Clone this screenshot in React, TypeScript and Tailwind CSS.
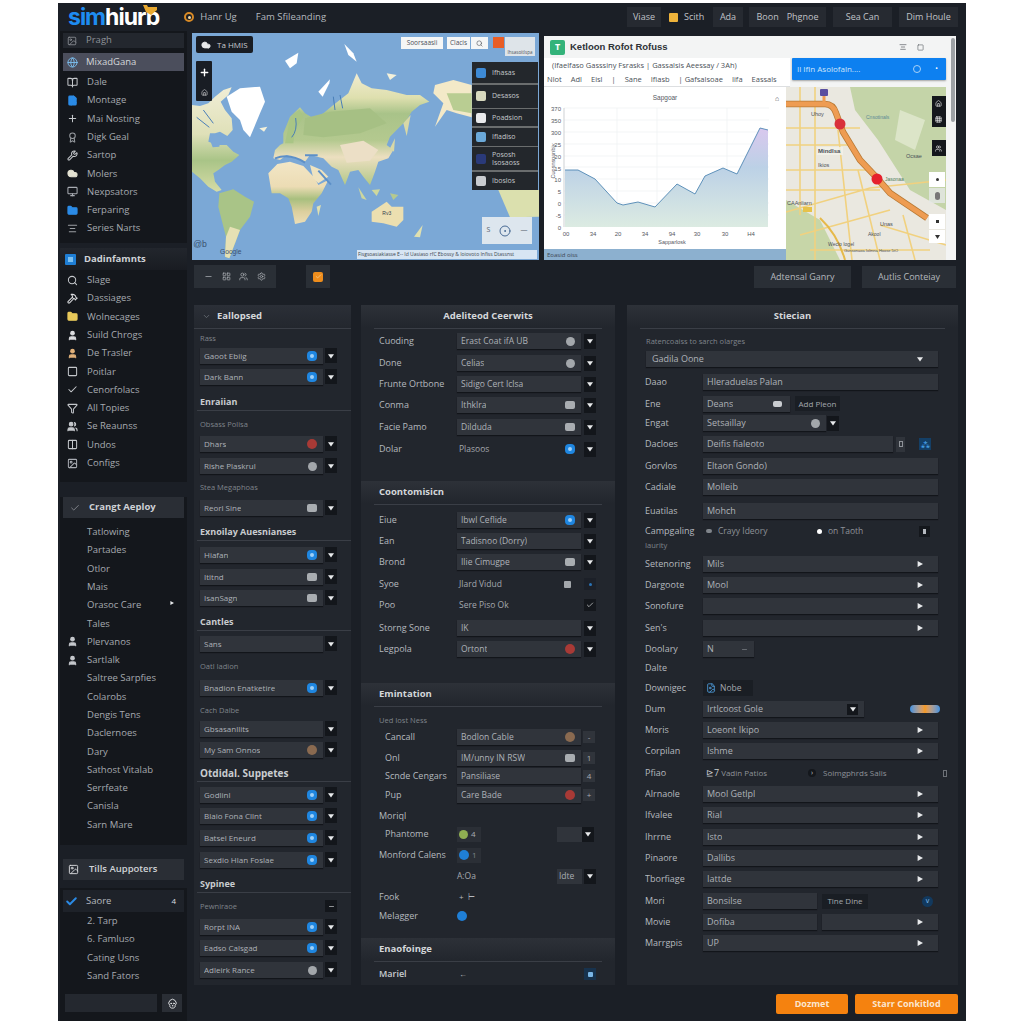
import {
  Image, Globe, BookOpen, FileImage, Plus, Award, Wrench, Cloud, Monitor, Folder, AlignCenter, Search, Hammer,
  User, Square, Check, Filter, Users, Columns2, ChevronDown, Grid3x3, LayoutGrid, Settings, CircleDot, Skull, Home, Minus,
} from 'lucide-react';
import type { ReactNode } from 'react';

function Caret({ dir = 'down', size = 6 }: { dir?: 'down' | 'right'; size?: number }) {
  return (
    <svg width={size} height={size} viewBox="0 0 10 10" className="shrink-0">
      {dir === 'down' ? <polygon points="0,2 10,2 5,9" fill="#e8eaec" /> : <polygon points="1,0 10,5 1,10" fill="#e8eaec" />}
    </svg>
  );
}

function Dot({ kind }: { kind: string }) {
  if (kind === 'blue') return <span className="size-[10px] rounded-[4px] bg-[#1f86e0] shrink-0 flex items-center justify-center"><span className="size-[4px] rounded-full bg-[#9fd0f7]" /></span>;
  if (kind === 'red') return <span className="size-[10px] rounded-full bg-[#a83a36] shrink-0" />;
  if (kind === 'tan') return <span className="size-[10px] rounded-full bg-[#8a6a50] shrink-0" />;
  if (kind === 'gray') return <span className="size-[9px] rounded-full bg-[#a3a7ab] shrink-0" />;
  return <span className="w-[10px] h-[8px] rounded-[2px] bg-[#a9adb1] shrink-0" />;
}

function Chev({ className = '' }: { className?: string }) {
  return <span className={`w-[12px] h-[15px] bg-[#13161b] flex items-center justify-center shrink-0 ${className}`}><Caret /></span>;
}

function Box({ text, dot, className = '', size = 'text-[8.5px]', children }: { text?: string; dot?: string; className?: string; size?: string; children?: ReactNode }) {
  return (
    <div className={`h-[16px] bg-[#30343b] flex items-center justify-between pl-[4px] pr-[6px] text-[#aeb2b8] shadow-[0_1px_1px_#12151a] ${size} ${className}`}>
      <span className="truncate">{text}</span>
      {dot && <Dot kind={dot} />}
      {children}
    </div>
  );
}

type Item =
  | { t: 'label'; text: string; m: string; chev?: boolean }
  | { t: 'sec'; text: string; m: string; big?: boolean }
  | { t: 'row'; text: string; dot?: string; m: string };

const col1: Item[] = [
  { t: 'label', text: 'Rass', m: 'mt-[3px]' },
  { t: 'row', text: 'Gaoot Ebiig', dot: 'blue', m: 'mt-[4px]' },
  { t: 'row', text: 'Dark Bann', dot: 'blue', m: 'mt-[5px]' },
  { t: 'sec', text: 'Enraiian', m: 'mt-[10px]' },
  { t: 'label', text: 'Obsass Polisa', m: 'mt-[7px]' },
  { t: 'row', text: 'Dhars', dot: 'red', m: 'mt-[6px]' },
  { t: 'row', text: 'Rishe Plaskrul', dot: 'gray', m: 'mt-[6px]' },
  { t: 'label', text: 'Stea Megaphoas', m: 'mt-[7px]' },
  { t: 'row', text: 'Reorl Sine', dot: 'img', m: 'mt-[7px]' },
  { t: 'sec', text: 'Exnoilay Auesnianses', m: 'mt-[9px]' },
  { t: 'row', text: 'Hiafan', dot: 'blue', m: 'mt-[6px]' },
  { t: 'row', text: 'Ititnd', dot: 'img', m: 'mt-[6px]' },
  { t: 'row', text: 'IsanSagn', dot: 'img', m: 'mt-[5px]' },
  { t: 'sec', text: 'Cantles', m: 'mt-[9px]' },
  { t: 'row', text: 'Sans', m: 'mt-[5px]' },
  { t: 'label', text: 'Oatl Iadion', m: 'mt-[8px]' },
  { t: 'row', text: 'Bnadion Enatketire', dot: 'blue', m: 'mt-[8px]' },
  { t: 'label', text: 'Cach Dalbe', m: 'mt-[8px]' },
  { t: 'row', text: 'Gbsasanllits', m: 'mt-[5px]' },
  { t: 'row', text: 'My Sam Onnos', dot: 'tan', m: 'mt-[5px]' },
  { t: 'sec', text: 'Otdidal. Suppetes', m: 'mt-[8px]', big: true },
  { t: 'row', text: 'Godlinl', dot: 'blue', m: 'mt-[5px]' },
  { t: 'row', text: 'Blaio Fona Cllnt', dot: 'blue', m: 'mt-[5px]' },
  { t: 'row', text: 'Batsel Eneurd', dot: 'blue', m: 'mt-[6px]' },
  { t: 'row', text: 'Sexdio Hlan Foslae', dot: 'blue', m: 'mt-[6px]' },
  { t: 'sec', text: 'Sypinee', m: 'mt-[9px]' },
  { t: 'label', text: 'Pewniraoe', m: 'mt-[7px]', chev: true },
  { t: 'row', text: 'Rorpt INA', dot: 'blue', m: 'mt-[7px]' },
  { t: 'row', text: 'Eadso Calsgad', dot: 'blue', m: 'mt-[5px]' },
  { t: 'row', text: 'Adleirk Rance', dot: 'gray', m: 'mt-[6px]' },
];

function Col1() {
  return (
    <div className="w-[157px] h-[680px] bg-[#22262d] overflow-hidden">
      <div className="h-[24px] bg-linear-to-b from-[#2b2f37] to-[#23272e] border-b border-[#3a3e46] flex items-center pl-[8px] gap-[6px] text-[9.5px] font-bold text-[#d4d7da]">
        <ChevronDown size={9} className="text-[#70757c]" />
        Eallopsed
      </div>
      <div className="flex flex-col pl-[6px]">
        {col1.map((it, i) => {
          if (it.t === 'label') return (
            <div key={i} className={`relative h-[12px] leading-[12px] text-[7.5px] text-[#7f848b] ${it.m}`}>
              {it.text}
              {it.chev && <span className="absolute left-[125px] top-0 w-[12px] h-[12px] bg-[#13161b] flex items-center justify-center"><Minus size={7} className="text-[#e8eaec]" /></span>}
            </div>
          );
          if (it.t === 'sec') return (
            <div key={i} className={`-ml-[3px] h-[16px] pl-[3px] border-b border-[#3a3e46] font-bold text-[#c9ccd0] leading-[14px] ${it.big ? 'text-[10px]' : 'text-[9px]'} ${it.m}`}>{it.text}</div>
          );
          return (
            <div key={i} className={`flex gap-[2px] ${it.m}`}>
              <Box text={it.text} dot={it.dot} size="text-[8px]" className="w-[123px]" />
              <Chev />
            </div>
          );
        })}
      </div>
    </div>
  );
}

function Strip({ text, center, className = '' }: { text: string; center?: boolean; className?: string }) {
  return (
    <div className={`h-[23px] bg-linear-to-b from-[#2d3138] to-[#22262d] flex items-center text-[9.5px] font-bold text-[#d4d7da] ${center ? 'justify-center' : 'pl-[18px]'} ${className}`}>
      <span>{text}</span>
    </div>
  );
}

function Line2({ label, text, dot, m, boxless, noChev }: { label: string; text: string; dot?: string; m: string; boxless?: boolean; noChev?: boolean }) {
  return (
    <div className={`flex items-center h-[16px] pl-[18px] ${m}`}>
      <span className="w-[78px] text-[9px] text-[#b5b9bf] truncate">{label}</span>
      {boxless ? (
        <div className="w-[124px] flex items-center justify-between pl-[2px] pr-[6px] text-[8.5px] text-[#a4a8ae]"><span>{text}</span>{dot && <Dot kind={dot} />}</div>
      ) : (
        <Box text={text} dot={dot} className="w-[124px]" />
      )}
      {!noChev && <Chev className="ml-[3px]" />}
    </div>
  );
}

function Col2() {
  return (
    <div className="w-[254px] h-[680px] bg-[#22262d] overflow-hidden">
      <Strip text="Adeliteod Ceerwits" center />
      <div className="mx-[13px] border-b border-[#3a3e46]" />
      <Line2 label="Cuoding" text="Erast Coat ifA UB" dot="gray" m="mt-[4px]" />
      <Line2 label="Done" text="Celias" dot="gray" m="mt-[6px]" />
      <Line2 label="Frunte Ortbone" text="Sidigo Cert Iclsa" m="mt-[5px]" />
      <Line2 label="Conma" text="Ithklra" dot="img" m="mt-[5px]" />
      <Line2 label="Facie Pamo" text="Dilduda" dot="img" m="mt-[6px]" />
      <Line2 label="Dolar" text="Plasoos" dot="blue" boxless m="mt-[6px]" />

      <Strip text="Coontomisicn" className="mt-[24px]" />
      <div className="mx-[13px] border-b border-[#3a3e46]" />
      <Line2 label="Eiue" text="Ibwl Ceflide" dot="blue" m="mt-[7px]" />
      <Line2 label="Ean" text="Tadisnoo (Dorry)" m="mt-[5px]" />
      <Line2 label="Brond" text="Ilie Cimugpe" dot="img" m="mt-[5px]" />
      <div className="flex items-center h-[16px] pl-[18px] mt-[6px]">
        <span className="w-[78px] text-[9px] text-[#b5b9bf]">Syoe</span>
        <div className="w-[124px] flex items-center justify-between pl-[2px] pr-[10px] text-[8.5px] text-[#a4a8ae]"><span>Jlard Vidud</span><span className="size-[7px] bg-[#a3a7ab] rounded-[1px]" /></div>
        <span className="ml-[3px] size-[12px] bg-[#1c2028] flex items-center justify-center"><span className="size-[3px] rounded-full bg-[#2a73b5]" /></span>
      </div>
      <div className="flex items-center h-[16px] pl-[18px] mt-[5px]">
        <span className="w-[78px] text-[9px] text-[#b5b9bf]">Poo</span>
        <div className="w-[124px] pl-[2px] text-[8.5px] text-[#a4a8ae]">Sere Piso Ok</div>
        <span className="ml-[3px] size-[12px] bg-[#14171c] flex items-center justify-center"><Check size={8} className="text-[#dfe1e3]" /></span>
      </div>
      <Line2 label="Storng Sone" text="IK" m="mt-[7px]" />
      <Line2 label="Legpola" text="Ortont" dot="red" m="mt-[5px]" />

      <Strip text="Emintation" className="mt-[26px]" />
      <div className="mx-[13px] border-b border-[#3a3e46]" />
      <div className="h-[12px] leading-[12px] pl-[18px] mt-[7px] text-[7.5px] text-[#7f848b]">Ued Iost Ness</div>
      {[
        { l: 'Cancall', t: 'Bodlon Cable', d: 'tan', m: 'mt-[3px]', end: '-' },
        { l: 'Onl', t: 'IM/unny IN RSW', d: 'img', m: 'mt-[5px]', end: '1' },
        { l: 'Scnde Cengars', t: 'Pansiliase', m: 'mt-[2px]', end: '4' },
        { l: 'Pup', t: 'Care Bade', d: 'red', m: 'mt-[3px]', end: '+' },
      ].map((r) => (
        <div key={r.l} className={`flex items-center h-[16px] pl-[24px] ${r.m}`}>
          <span className="w-[72px] text-[9px] text-[#b5b9bf] truncate">{r.l}</span>
          <Box text={r.t} dot={r.d} className="w-[124px]" />
          <span className="ml-[2px] size-[12px] bg-[#30343b] text-[8px] text-[#a9adb3] flex items-center justify-center">{r.end}</span>
        </div>
      ))}
      <div className="h-[14px] pl-[18px] mt-[6px] text-[9px] text-[#b5b9bf] leading-[14px]">Moriql</div>
      <div className="flex items-center h-[16px] pl-[24px] mt-[3px]">
        <span className="w-[72px] text-[9px] text-[#b5b9bf]">Phantome</span>
        <span className="w-[24px] h-[15px] bg-[#2b2f36] flex items-center gap-[3px] pl-[2px]"><span className="size-[9px] rounded-full bg-[#8fae52]" /><span className="text-[8px] text-[#a9adb3]">4</span></span>
        <div className="ml-[76px] w-[25px] h-[15px] bg-[#30343b]" />
        <Chev />
      </div>
      <div className="flex items-center h-[16px] pl-[18px] mt-[5px]">
        <span className="w-[78px] text-[9px] text-[#b5b9bf] truncate">Monford Calens</span>
        <span className="w-[24px] h-[15px] bg-[#2b2f36] flex items-center gap-[3px] pl-[2px]"><span className="size-[10px] rounded-full bg-[#1f7fd6]" /><span className="text-[8px] text-[#7f848b]">1</span></span>
      </div>
      <div className="flex items-center h-[16px] pl-[96px] mt-[5px]">
        <span className="w-[100px] text-[8.5px] text-[#a4a8ae]">A:Oa</span>
        <div className="w-[25px] h-[15px] bg-[#30343b] text-[8.5px] text-[#a9adb3] flex items-center pl-[2px]">Idte</div>
        <Chev className="ml-[2px]" />
      </div>
      <div className="flex items-center h-[16px] pl-[18px] mt-[5px]">
        <span className="w-[80px] text-[9px] text-[#b5b9bf]">Fook</span>
        <span className="text-[8px] text-[#b5b9bf]">+ &nbsp;⊢</span>
      </div>
      <div className="flex items-center h-[16px] pl-[18px] mt-[3px]">
        <span className="w-[78px] text-[9px] text-[#b5b9bf]">Melagger</span>
        <span className="size-[10px] rounded-full bg-[#1f7fd6]" />
      </div>
      <Strip text="Enaofoinge" className="mt-[14px]" />
      <div className="mx-[13px] border-b border-[#3a3e46]" />
      <div className="flex items-center h-[16px] pl-[18px] mt-[4px]">
        <span className="w-[80px] text-[9px] font-semibold text-[#c9ccd0]">Mariel</span>
        <span className="text-[8px] text-[#b5b9bf]">←</span>
        <span className="ml-auto mr-[19px] size-[12px] bg-[#17324d] flex items-center justify-center"><span className="size-[5px] rounded-[1px] bg-[#7ab6e6]" /></span>
      </div>
    </div>
  );
}

function Lbl({ children }: { children: ReactNode }) {
  return <span className="w-[58px] shrink-0 text-[9px] text-[#b5b9bf] truncate">{children}</span>;
}

function Line3({ label, text, m, arrow }: { label: string; text?: string; m: string; arrow?: boolean }) {
  return (
    <div className={`flex items-center h-[16px] pl-[18px] ${m}`}>
      <Lbl>{label}</Lbl>
      <Box text={text} size="text-[9px]" className="w-[235px]">{arrow && <span className="pr-[9px]"><Caret dir="right" /></span>}</Box>
    </div>
  );
}

function Col3() {
  return (
    <div className="w-[331px] h-[680px] bg-[#22262d] overflow-hidden">
      <Strip text="Stiecian" center />
      <div className="mx-[13px] border-b border-[#3a3e46]" />
      <div className="h-[12px] leading-[12px] pl-[19px] mt-[6px] text-[7.5px] text-[#7f848b]">Ratencoaiss to sarch olarges</div>
      <div className="pl-[19px] mt-[4px]">
        <Box text="Gadila Oone" size="text-[9px]" className="w-[292px] pl-[6px]"><span className="pr-[9px]"><Caret /></span></Box>
      </div>
      <Line3 label="Daao" text="Hleraduelas Palan" m="mt-[7px]" />
      <div className="flex items-center h-[15px] pl-[18px] mt-[6px]">
        <Lbl>Ene</Lbl>
        <Box text="Deans" size="text-[9px]" className="w-[87px]"><span className="w-[9px] h-[6px] rounded-[2px] bg-[#c9ccd0] mr-[2px]" /></Box>
        <span className="ml-[5px] w-[45px] h-[15px] bg-[#1a1e24] text-[8px] text-[#a4a8ae] flex items-center justify-center whitespace-nowrap">Add Pleon</span>
      </div>
      <div className="flex items-center h-[16px] pl-[18px] mt-[4px]">
        <Lbl>Engat</Lbl>
        <Box text="Setsaillay" dot="gray" size="text-[9px]" className="w-[123px] pr-[3px]" />
        <Chev className="ml-[1px]" />
      </div>
      <div className="flex items-center h-[16px] pl-[18px] mt-[5px]">
        <Lbl>Dacloes</Lbl>
        <Box text="Deifis fialeoto" size="text-[9px]" className="w-[190px]" />
        <span className="ml-[3px] w-[9px] h-[15px] bg-[#30343b] flex items-center justify-center"><span className="w-[4px] h-[6px] border border-[#8e9298]" /></span>
        <span className="ml-[14px] size-[12px] bg-[#143f66] flex items-center justify-center text-[8px] text-[#49a6ee]">⁂</span>
      </div>
      <Line3 label="Gorvlos" text="Eltaon Gondo)" m="mt-[6px]" />
      <Line3 label="Cadiale" text="Molleib" m="mt-[5px]" />
      <Line3 label="Euatilas" text="Mohch" m="mt-[7px] h-[17px]" />
      <div className="flex h-[29px] pl-[18px] mt-[4px]">
        <div className="w-[58px] shrink-0 flex flex-col">
          <span className="text-[9px] leading-[16px] text-[#b5b9bf] truncate">Campgaling</span>
          <span className="text-[7.5px] leading-[12px] text-[#7f848b]">Iaurity</span>
        </div>
        <div className="flex h-[16px] items-center w-[235px] text-[8.5px] text-[#8e9298]">
          <span className="w-[6px] h-[4px] rounded-full bg-[#80858b] ml-[3px] mr-[6px]" />
          <span className="w-[99px]">Crayy Ideory</span>
          <span className="size-[5px] rounded-full bg-white mr-[6px]" />
          <span>on Taoth</span>
          <span className="ml-auto mr-[8px] size-[11px] bg-[#14171c] flex items-center justify-center"><span className="w-[3px] h-[5px] bg-[#b5b9bf]" /></span>
        </div>
      </div>
      <Line3 label="Setenoring" text="Mils" arrow m="mt-[4px]" />
      <Line3 label="Dargoote" text="Mool" arrow m="mt-[5px]" />
      <Line3 label="Sonofure" arrow m="mt-[5px]" />
      <Line3 label="Sen's" arrow m="mt-[6px]" />
      <div className="flex items-center h-[16px] pl-[18px] mt-[5px]">
        <Lbl>Doolary</Lbl>
        <Box text="N" size="text-[9px]" className="w-[51px]"><Minus size={7} className="text-[#8e9298]" /></Box>
      </div>
      <div className="flex items-center h-[16px] pl-[18px] mt-[3px]"><Lbl>Dalte</Lbl></div>
      <div className="flex items-center h-[16px] pl-[18px] mt-[4px]">
        <Lbl>Downigec</Lbl>
        <span className="w-[50px] h-[16px] bg-[#1a1e24] flex items-center pl-[3px] gap-[4px] text-[8.5px] text-[#a4a8ae]">
          <FileImage size={10} className="text-[#4f9fe0]" />Nobe
        </span>
      </div>
      <div className="flex items-center h-[16px] pl-[18px] mt-[5px]">
        <Lbl>Dum</Lbl>
        <Box text="Irtlcoost Gole" size="text-[9px]" className="w-[161px] pr-[3px]"><span className="size-[11px] bg-[#13161b] flex items-center justify-center"><Caret /></span></Box>
        <span className="ml-[46px] w-[30px] h-[8px] rounded-full bg-linear-to-r from-[#3b8fe0] via-[#f59a1b] to-[#3b8fe0]" />
      </div>
      <Line3 label="Moris" text="Loeont Ikipo" arrow m="mt-[5px]" />
      <Line3 label="Corpilan" text="Ishme" arrow m="mt-[5px]" />
      <div className="flex items-center h-[16px] pl-[18px] mt-[6px]">
        <Lbl>Pfiao</Lbl>
        <div className="w-[115px] flex items-center text-[8px] text-[#8e9298] pl-[3px] gap-[2px]">
          <span className="text-[#c9ccd0] text-[9px]">⊵7</span>
          <span>Vadin Patios</span>
          <span className="ml-auto mr-[2px] size-[8px] rounded-full bg-[#14171c] text-[7px] flex items-center justify-center text-[#c9ccd0]">›</span>
        </div>
        <span className="ml-[5px] text-[8px] text-[#8e9298] w-[120px]">Soimgphrds Salis</span>
        <span className="w-[4px] h-[7px] border border-[#6d7177]" />
      </div>
      <Line3 label="Alrnaole" text="Mool Getlpl" arrow m="mt-[5px]" />
      <Line3 label="Ifvalee" text="Rial" arrow m="mt-[5px]" />
      <Line3 label="Ihrrne" text="Isto" arrow m="mt-[6px]" />
      <Line3 label="Pinaore" text="Dallibs" arrow m="mt-[5px]" />
      <Line3 label="Tborfiage" text="Iattde" arrow m="mt-[5px]" />
      <div className="flex items-center h-[16px] pl-[18px] mt-[6px]">
        <Lbl>Mori</Lbl>
        <Box text="Bonsilse" size="text-[9px]" className="w-[114px]" />
        <span className="ml-[5px] w-[46px] h-[15px] bg-[#1a1e24] text-[8px] text-[#a4a8ae] flex items-center justify-center">Tine Dine</span>
        <span className="ml-[54px] size-[11px] rounded-full bg-[#12395e] text-[7px] text-[#8cc2f0] flex items-center justify-center">v</span>
      </div>
      <div className="flex items-center h-[16px] pl-[18px] mt-[5px]">
        <Lbl>Movie</Lbl>
        <Box text="Dofiba" size="text-[9px]" className="w-[114px]" />
        <Box className="ml-[5px] w-[116px] justify-end"><span className="pr-[9px]"><Caret dir="right" /></span></Box>
      </div>
      <Line3 label="Marrgpis" text="UP" arrow m="mt-[5px]" />
    </div>
  );
}

const side1: [typeof Image, string, string][] = [
  [BookOpen, 'Dale', 'text-[#c5c8cc]'],
  [FileImage, 'Montage', 'text-[#2b8be6]'],
  [Plus, 'Mai Nosting', 'text-[#c5c8cc]'],
  [Award, 'Digk Geal', 'text-[#9a9ea3]'],
  [Wrench, 'Sartop', 'text-[#c5c8cc]'],
  [Cloud, 'Molers', 'text-[#e4e2d2]'],
  [Monitor, 'Nexpsators', 'text-[#a9adb3]'],
  [Folder, 'Ferparing', 'text-[#2b8be6]'],
  [AlignCenter, 'Series Narts', 'text-[#9a9ea3]'],
];
const side2: [typeof Image, string, string][] = [
  [Search, 'Slage', 'text-[#c5c8cc]'],
  [Hammer, 'Dassiages', 'text-[#dcdde0]'],
  [Folder, 'Wolnecages', 'text-[#e8c95a]'],
  [User, 'Suild Chrogs', 'text-[#dcdde0]'],
  [User, 'De Trasler', 'text-[#e2b27a]'],
  [Square, 'Poitlar', 'text-[#c5c8cc]'],
  [Check, 'Cenorfolacs', 'text-[#c5c8cc]'],
  [Filter, 'All Topies', 'text-[#c5c8cc]'],
  [Users, 'Se Reaunss', 'text-[#c5c8cc]'],
  [Columns2, 'Undos', 'text-[#c5c8cc]'],
  [Image, 'Configs', 'text-[#a9adb3]'],
];
const side3 = ['Tatlowing', 'Partades', 'Otlor', 'Mais', 'Orasoc Care', 'Tales', 'Plervanos', 'Sartlalk', 'Saltree Sarpfies', 'Colarobs', 'Dengis Tens', 'Daclernoes', 'Dary', 'Sathost Vitalab', 'Serrfeate', 'Canisla', 'Sarn Mare'];
const side5 = ['2. Tarp', '6. Famluso', 'Cating Usns', 'Sand Fators'];

function SideRow({ Icon, text, color, filled }: { Icon?: typeof Image; text: string; color?: string; filled?: boolean }) {
  return (
    <div className="h-[18.3px] flex items-center pl-[7px] text-[9.5px] text-[#a6aab0] whitespace-nowrap">
      <span className="w-[20px] flex">{Icon && <Icon size={11} className={color} strokeWidth={2.2} fill={filled ? 'currentColor' : 'none'} />}</span>
      {text}
    </div>
  );
}

function Sidebar() {
  return (
    <aside className="w-[127px] shrink-0 flex flex-col">
      <div className="h-[212px] bg-[#14171c] pt-[2px]">
        <div className="mx-[3px] h-[15px] bg-[#23272e] flex items-center pl-[4px] gap-[9px] text-[9.5px] text-[#8e9298]">
          <Image size={10} className="text-[#8e9298]" />Pragh
        </div>
        <div className="mx-[3px] mt-[5px] h-[18px] bg-[#4b4e5c] flex items-center pl-[4px] gap-[8px] text-[9.5px] text-[#d4d7da]">
          <Globe size={11} className="text-[#7cc0f0]" />MixadGana
        </div>
        <div className="mt-[2px]">
          {side1.map(([I, t, c]) => <SideRow key={t} Icon={I} text={t} color={c} filled={t === 'Molers' || t === 'Ferparing' || t === 'Montage'} />)}
        </div>
      </div>
      <div className="h-[234px] mt-[5px] bg-[#14171c]">
        <div className="h-[22px] bg-linear-to-b from-[#22262d] to-[#191c22] flex items-center pl-[5px] gap-[8px] text-[9.5px] font-bold text-[#cfd2d6]">
          <span className="size-[11px] bg-[#1f7fd6] rounded-[1px] flex items-center justify-center"><span className="size-[5px] bg-[#7cc0f0]" /></span>Dadinfamnts
        </div>
        <div className="mt-[1px]">
          {side2.map(([I, t, c]) => <SideRow key={t} Icon={I} text={t} color={c} filled={t === 'Wolnecages' || t === 'De Trasler' || t === 'Suild Chrogs' || t === 'Se Reaunss'} />)}
        </div>
      </div>
      <div className="h-[348px] mt-[15px] bg-[#14171c]">
        <div className="mx-[3px] h-[21px] bg-[#2a2e35] flex items-center pl-[7px] gap-[9px] text-[9.5px] font-bold text-[#cfd2d6]">
          <Check size={10} className="text-[#8e9298]" />Crangt Aeploy
        </div>
        <div className="mt-[5px] relative">
          {side3.map((t, i) => (
            <SideRow key={t} text={t} Icon={i === 6 || i === 7 ? User : undefined} color="text-[#c5c8cc]" filled />
          ))}
          <span className="absolute right-[13px] top-[78px]"><Caret dir="right" size={4} /></span>
        </div>
      </div>
      <div className="mx-[3px] mt-[14px] h-[21px] bg-[#2a2e35] flex items-center pl-[5px] gap-[10px] text-[9.5px] font-semibold text-[#cfd2d6]">
        <Image size={11} className="text-[#dcdde0]" />Tills Auppoters
      </div>
      <div className="mt-[8px] flex-1 bg-[#14171c] pt-[2px]">
        <div className="mx-[3px] h-[22px] bg-[#1e2229] flex items-center pl-[2px] gap-[8px] text-[9.5px] text-[#b5b9bf]">
          <Check size={13} strokeWidth={3.5} className="text-[#2b8be6]" />Saore
          <span className="ml-auto mr-[8px] text-[8px] text-[#dcdde0]">4</span>
        </div>
        {side5.map((t) => <SideRow key={t} text={t} />)}
        <div className="flex gap-[5px] mx-[5px] mt-[9px]">
          <div className="w-[93px] h-[18px] bg-[#24282f]" />
          <div className="w-[20px] h-[18px] bg-[#2a2e35] flex items-center justify-center"><Skull size={11} className="text-[#e4e6e8]" /></div>
        </div>
      </div>
    </aside>
  );
}

function WorldMap() {
  return (
    <svg viewBox="6 9 1041 681" preserveAspectRatio="none" className="absolute inset-0 w-full h-full">
      <defs>
        <filter id="soft"><feGaussianBlur stdDeviation="1.6" /></filter>
        <linearGradient id="naLand" x1="0" y1="0" x2="0" y2="1">
          <stop offset="0" stopColor="#f1eed6" />
          <stop offset="0.45" stopColor="#dfe0b8" />
          <stop offset="0.7" stopColor="#a9c487" />
          <stop offset="1" stopColor="#d6dca6" />
        </linearGradient>
        <linearGradient id="asLand" x1="0" y1="0" x2="0" y2="1">
          <stop offset="0" stopColor="#f2ecd0" />
          <stop offset="0.22" stopColor="#dedfae" />
          <stop offset="0.36" stopColor="#a9c389" />
          <stop offset="0.6" stopColor="#b4c98f" />
          <stop offset="0.75" stopColor="#ecdfc0" />
          <stop offset="1" stopColor="#b2c888" />
        </linearGradient>
        <linearGradient id="afLand" x1="0" y1="0" x2="0" y2="1">
          <stop offset="0" stopColor="#f2e6c6" />
          <stop offset="0.4" stopColor="#ecdcb4" />
          <stop offset="0.6" stopColor="#a8bf7e" />
          <stop offset="0.8" stopColor="#dccf9e" />
          <stop offset="1" stopColor="#ecdeb6" />
        </linearGradient>
      </defs>
      <rect x="6" y="9" width="1041" height="681" fill="#7ba8d6" />
      <g filter="url(#soft)" strokeLinejoin="round">
        <polygon fill="url(#naLand)" points="6,225 30,228 55,220 75,200 100,180 125,172 115,195 92,215 105,240 125,265 128,300 112,318 90,305 75,310 60,310 55,335 85,345 110,345 130,365 148,375 125,395 105,405 85,420 70,430 75,455 95,480 80,485 55,470 30,445 6,425" />
        <polygon fill="#7ba8d6" points="58,325 75,312 92,325 88,350 68,352" />
        <polygon fill="url(#afLand)" points="235,430 262,402 300,395 340,408 375,445 385,465 415,450 395,490 370,520 365,545 345,575 315,582 305,530 295,505 270,490 245,490" />
        <polygon fill="#efe3bf" points="360,405 395,420 415,440 385,460 370,445" />
        <polygon fill="url(#asLand)" points="250,385 255,360 270,345 280,340 280,310 300,260 330,232 345,250 370,265 400,250 430,225 475,190 500,130 515,160 545,175 590,180 650,195 690,195 718,215 690,225 665,245 650,270 625,295 600,320 590,345 610,360 595,385 565,395 555,425 540,465 520,440 505,420 480,425 465,465 445,420 425,410 400,385 360,375 345,395 320,385 290,375 270,390" />
        <polygon fill="#ecdfc6" points="450,345 520,332 565,360 540,392 470,398" />
        <polygon fill="#a6c084" points="345,265 420,245 540,235 590,280 510,310 400,322 340,315" />
        <polygon fill="#a9c585" points="285,340 300,268 328,238 340,262 315,300 310,340" />
        <polygon fill="#f3e9c8" points="735,165 790,150 845,165 845,262 800,250 770,240 735,290 760,220 730,190" />
        <polygon fill="#b9cd92" points="770,190 845,190 845,250 790,240" />
        <polygon fill="#dbe0ae" points="925,480 1047,480 1047,560 960,562" />
        <polygon fill="#a9c487" points="88,490 130,478 165,500 192,515 180,560 150,600 135,640 118,685 105,680 108,620 95,570 85,530" />
        <polygon fill="#e6e1b4" points="120,590 150,600 135,640 118,685 105,680 108,620" />
        <polygon fill="#ecdfb0" points="545,545 590,515 605,530 640,530 640,570 620,590 580,580 545,575" />
        <polygon fill="#ffffff" points="110,200 150,175 210,170 225,215 210,250 180,322 160,300 150,270 125,245" />
        <polygon fill="#ffffff" points="285,92 325,68 320,100 300,115" />
        <polygon fill="#ffffff" points="463,42 490,70 500,95 475,75" />
        <polygon fill="#ffffff" points="385,185 420,148 418,160 398,200" />
        <polygon fill="#f4f1da" points="590,130 620,135 600,150" />
        <polygon fill="#f4f1da" points="208,295 232,290 222,305" />
        <polygon fill="#dfe0b0" points="380,530 393,525 385,558" />
        <polygon fill="#b5c98f" points="600,490 625,495 610,510" />
        <polygon fill="#cdd79e" points="505,472 530,510 515,505" />
        <polygon fill="#cdd79e" points="545,480 570,478 560,498" />
        <polygon fill="#d8d8a6" points="640,280 662,255 650,318" />
        <polygon fill="#d8d8a6" points="600,355 615,325 612,365" />
        <polygon fill="#dfe0b0" points="672,620 698,585 690,622" />
      </g>
      <path d="M255 385 Q300 368 345 398 M345 376 h38 M385 422 l38 42" stroke="#5d90c8" strokeWidth="6" fill="none" />
      <path d="M305 322 q18 -20 12 -58 M20 262 l38 30 M40 240 l30 40 M430 200 l5 40 M450 195 l8 40" stroke="#4a7fb8" strokeWidth="3" fill="none" />
      <text x="10" y="650" fontSize="26" fill="#39506e" fontFamily="Liberation Sans">@b</text>
      <text x="90" y="672" fontSize="20" fill="#39506e" fontFamily="Liberation Sans">Google</text>
      <text x="577" y="555" fontSize="15" fill="#33414f" fontFamily="Liberation Sans">Rv3</text>
    </svg>
  );
}

function RoadMap() {
  return (
    <svg viewBox="786 87 160 173" preserveAspectRatio="none" className="absolute inset-0 w-full h-full">
      <rect x="786" y="87" width="160" height="173" fill="#eae8e0" />
      <polygon points="850,87 946,87 946,210 910,190 878,140 855,110" fill="#c4d4a8" />
      <polygon points="786,200 820,220 840,260 786,260" fill="#c7d6a8" />
      <polygon points="900,110 925,120 915,150 895,140" fill="#dce5c8" />
      <g stroke="#f1d17f" strokeWidth="1.6" fill="none">
        <path d="M786 128 H860 M786 145 H850 M786 170 H868 M786 190 H880 M786 212 L870 188 L946 180 M800 235 L890 210 M810 250 H930" />
        <path d="M800 87 V215 M815 87 V260 M838 130 L852 260 M858 170 L880 260 M903 215 L915 260 M880 225 L946 245" />
      </g>
      <path d="M820 218 Q838 235 845 260" stroke="#e6b94a" strokeWidth="2" fill="none" />
      <path d="M783 104 H825 Q833 104 836 113 L843 132 L860 160 L877 178 L890 193 L927 218" stroke="#b97a35" strokeWidth="6.5" fill="none" />
      <path d="M783 104 H825 Q833 104 836 113 L843 132 L860 160 L877 178 L890 193 L927 218" stroke="#ee9c52" strokeWidth="5" fill="none" />
      <path d="M824 104 V92" stroke="#ee9c52" strokeWidth="3" />
      <rect x="820" y="89" width="8" height="7" rx="1" fill="#5a4fa0" />
      <circle cx="840" cy="124" r="5.5" fill="#d9303a" />
      <circle cx="877" cy="179" r="5.5" fill="#e5202c" />
      <rect x="817" y="147" width="26" height="8" fill="#f3f1e8" opacity="0.8" />
      <g fontFamily="Liberation Sans" fill="#4b5158">
        <text x="811" y="116" fontSize="5.5">Uhoy</text>
        <text x="818" y="153" fontSize="6" fontWeight="700">Mindlsa</text>
        <text x="818" y="167" fontSize="5.5">Ikios</text>
        <text x="906" y="158" fontSize="5.5">Ocsae</text>
        <text x="885" y="181" fontSize="5" fill="#4d7a5a">Jasonaa</text>
        <text x="866" y="119" fontSize="5" fill="#5b8a95">Cnsotinals</text>
        <text x="787" y="205" fontSize="5.5">CAAnliarn</text>
        <text x="880" y="226" fontSize="5.5">Unas</text>
        <text x="868" y="236" fontSize="5">Akool</text>
        <text x="828" y="246" fontSize="5">Weclo Iogel</text>
        <text x="844" y="252" fontSize="4">Gunsonaoa Iolmna Hoose 5tO</text>
      </g>
      <rect x="803" y="207" width="9" height="5" fill="#e6c24a" />
    </svg>
  );
}

function Chart() {
  const pts = '565,169 578,169 595,178 617,202 623,204 638,201 655,206 677,183 695,193 705,175 723,167 737,173 760,127 768,129';
  const yL = ['370', '350', '300', '25', '20', '15', '10', '5', '0', '-5', '0'];
  return (
    <svg viewBox="544 86 242 162" className="absolute inset-0 w-full h-full">
      <defs>
        <linearGradient id="area" x1="0" y1="0" x2="0" y2="1">
          <stop offset="0" stopColor="#d9c8ee" />
          <stop offset="0.4" stopColor="#bcd1e6" />
          <stop offset="1" stopColor="#dcebe2" />
        </linearGradient>
      </defs>
      <g stroke="#eef0f2" strokeWidth="0.7">
        {[107, 119, 131, 143, 155, 166, 178, 190, 202, 214].map((y) => <line key={y} x1="564" x2="769" y1={y} y2={y} />)}
        {[617, 657, 727].map((x) => <line key={x} x1={x} x2={x} y1="107" y2="226" />)}
      </g>
      <line x1="564" x2="564" y1="107" y2="226" stroke="#b9bdc2" strokeWidth="0.7" />
      <polygon points={`565,226 ${pts} 768,226`} fill="url(#area)" />
      <polyline points={pts} fill="none" stroke="#4f87b3" strokeWidth="0.9" />
      <g fontFamily="Liberation Sans" fontSize="6" fill="#55595f">
        {yL.map((l, i) => <text key={i} x="561" y={110 + i * 11.9} textAnchor="end">{l}</text>)}
        {[['566', '00'], ['593', '34'], ['618', '20'], ['645', '34'], ['672', '94'], ['697', '30'], ['725', '30'], ['751', 'H4']].map(([x, l]) => <text key={x} x={x} y="235" textAnchor="middle">{l}</text>)}
        <text x="672" y="243" textAnchor="middle" fontSize="5.5">Sapparlosk</text>
        <text x="665" y="99" textAnchor="middle" fontSize="6.5">Sapgoar</text>
        <text x="777" y="100" textAnchor="middle" fontSize="7">⌂</text>
        <text x="555" y="160" fontSize="5.5" textAnchor="middle" transform="rotate(-90 555 160)">Cuosnsnanbiy</text>
      </g>
    </svg>
  );
}

function MapPanel() {
  const list = [
    { t: 'Ifhasas', h: 'h-[21px]', c: 'bg-[#3d8ad6]' },
    { t: 'Desasos', h: 'h-[23px]', c: 'bg-[#d7d9bf]' },
    { t: 'Poadsion', h: 'h-[17px]', c: 'bg-[#e9eaec]' },
    { t: 'Ifladiso', h: 'h-[18px]', c: 'bg-[#6ba9d9]' },
    { t: 'Pososh Isosaoss', h: 'h-[23px]', c: 'bg-[#2a3a7a]' },
    { t: 'Iboslos', h: 'h-[18px]', c: 'bg-[#c9ccd0]' },
  ];
  return (
    <div className="relative w-[347px] h-[227px] overflow-hidden">
      <WorldMap />
      <div className="absolute left-[4px] top-[3px] w-[57px] h-[17px] bg-[#191d24] rounded-[2px] flex items-center pl-[5px] gap-[6px] text-[8px] text-[#c9ccd0]">
        <Cloud size={10} fill="#e8e9ea" className="text-[#e8e9ea]" />Ta HMIS
      </div>
      <div className="absolute left-[4px] top-[28px] w-[16px] h-[40px] bg-[#191d24] rounded-[1px] flex flex-col items-center justify-around">
        <Plus size={11} strokeWidth={3} className="text-white" />
        <Home size={7} className="text-[#dcdde0]" />
      </div>
      <div className="absolute right-[4px] top-[4px] flex items-start gap-[1px] text-[6.5px] text-[#4b5158]">
        <span className="w-[42px] h-[12px] bg-[#f5f6f6] flex items-center justify-center">Soorsaasli</span>
        <span className="ml-[3px] w-[23px] h-[12px] bg-[#f5f6f6] flex items-center justify-center">Clacis</span>
        <span className="w-[17px] h-[12px] bg-[#f5f6f6] flex items-center justify-center"><Search size={7} /></span>
        <span className="ml-[4px] size-[11px] bg-[#e85d26]" />
        <span className="w-[30px] h-[19px] bg-[#e9eaeb]/90 text-[4.5px] flex items-end justify-center">Ihsasoitlspa</span>
      </div>
      <div className="absolute right-[1px] top-[29px] w-[66px] bg-[#6a6d6e] flex flex-col gap-[1.5px]">
        {list.map((l) => (
          <div key={l.t} className={`${l.h} bg-[#23272c] flex items-center pl-[4px] gap-[6px] text-[7px] text-[#c4c7cb]`}>
            <span className={`size-[10px] rounded-[2px] shrink-0 ${l.c}`} />
            <span className="leading-[8px]">{l.t}</span>
          </div>
        ))}
      </div>
      <div className="absolute left-[290px] top-[184px] w-[50px] h-[27px] bg-[#e8ecf1]/90 flex items-center justify-around text-[7px] text-[#5a6470]">
        <span>S</span><CircleDot size={12} className="text-[#486a94]" /><span>—</span>
      </div>
      <div className="absolute left-[165px] top-[217px] w-[180px] h-[9px] bg-white/70 text-[5px] leading-[9px] text-[#3c4650] whitespace-nowrap overflow-hidden px-[1px]">
        Fisgsoasiakiasse E-- Id Uasiaso rfC Ebossy & Ioiovoto Infiss Dtassnst
      </div>
    </div>
  );
}

function AnalyticsPanel() {
  return (
    <div className="relative w-[412px] h-[224px] mt-[3px] bg-[#f3f4f4] overflow-hidden flex flex-col">
      <div className="h-[22px] shrink-0 flex items-center pl-[6px] gap-[5px]">
        <span className="size-[15px] rounded-[2px] bg-[#34b37a] text-[9px] font-bold text-white flex items-center justify-center">T</span>
        <span className="text-[9.5px] font-bold text-[#2e3236] font-['Liberation_Sans',sans-serif]">Ketloon Rofot Rofuss</span>
        <span className="ml-auto mr-[32px] flex items-center gap-[10px] text-[#55595f]"><AlignCenter size={8} /><Square size={7} /></span>
      </div>
      <div className="h-[15px] shrink-0 w-[246px] bg-white flex items-center pl-[8px] text-[7.5px] text-[#4b5158] whitespace-nowrap">(Ifaelfaso Gasssiny Fsrasks | Gassalsis Aeessay / 3Ah)</div>
      <div className="h-[14px] shrink-0 w-[246px] bg-white border-b border-[#dddfe1] flex items-center pl-[3px] gap-[9px] text-[7.5px] text-[#4b5158] whitespace-nowrap">
        <span>Nlot</span><span>Adl</span><span>Eisl</span><span>|</span><span>Sane</span><span>Ifiasb</span><span>| Gafsalsoae</span><span>Iifa</span><span>Eassals</span>
      </div>
      <div className="relative flex-1">
        <div className="absolute left-0 top-0 w-[402px] h-full bg-[#8cb0cf]">
          <div className="absolute left-[242px] right-0 inset-y-0"><RoadMap /></div>
          <div className="absolute left-0 top-0 w-[242px] h-[162px] bg-white"><Chart /></div>
          <div className="absolute left-0 top-[164px] text-[6px] text-[#3c4650] pl-[3px]">Eoasid oiss</div>
        </div>
        <div className="absolute right-[10px] top-[9px] w-[15px] flex flex-col items-center gap-[4px]">
          <div className="w-[14px] h-[31px] bg-[#14171c] flex flex-col items-center justify-around"><Home size={7} className="text-white" /><Grid3x3 size={7} className="text-white" /></div>
          <div className="h-[5px]" />
          <div className="w-[14px] h-[16px] bg-[#14171c] flex items-center justify-center"><Users size={7} className="text-white" /></div>
        </div>
        <div className="absolute right-[11px] top-[85px] w-[16px] flex flex-col items-center gap-[1px]">
          <div className="w-[16px] h-[15px] bg-white flex items-center justify-center"><span className="size-[3px] rounded-full bg-[#333]" /></div>
          <div className="w-[16px] h-[15px] bg-[#e5e7e6]/80 flex items-center justify-center"><span className="w-[5px] h-[8px] rounded-full bg-[#777]" /></div>
          <div className="h-[9px]" />
          <div className="w-[16px] h-[15px] bg-white flex items-center justify-center"><span className="size-[3px] bg-[#333]" /></div>
          <div className="w-[16px] h-[13px] bg-white flex items-center justify-center"><svg width="5" height="4" viewBox="0 0 10 8"><polygon points="0,0 10,0 5,8" fill="#333" /></svg></div>
        </div>
      </div>
      <div className="absolute left-[248px] top-[22px] w-[154px] h-[22px] bg-[#0d80f0] flex items-center pl-[5px] text-[8px] text-[#cfe6fb] rounded-[1px] shadow-[0_1px_2px_#0005]">
        Il Ifln Asolofaln....
        <span className="ml-auto mr-[14px] size-[8px] rounded-full border border-[#a9d2f7]" />
        <span className="mr-[8px] text-[7px] text-white">•</span>
      </div>
      <div className="absolute right-[1px] top-[2px] w-[4px] h-[84px] rounded-full bg-[#9da1a5]" />
    </div>
  );
}

export default function App() {
  return (
    <div className="w-[1024px] h-[1024px] bg-white pt-[3px] pl-[58px] font-['Open_Sans',sans-serif] overflow-hidden">
      <div className="w-[908px] h-[1018px] bg-[#1b1f26] flex flex-col">
        <header className="h-[28px] shrink-0 flex items-center relative pl-[10px]">
          <span className="text-[23px] leading-[23px] font-bold tracking-[-1px] font-['Inter',sans-serif]">
            <span className="text-[#1e8cf0]">sim</span><span className="text-white">hiurb</span>
          </span>
          <svg viewBox="0 0 14 10" className="absolute left-[85px] top-[2px] w-[14px] h-[10px]">
            <polygon points="0,0 4,0 5,2 14,2 14,5 8,10 3,7" fill="#e9a92f" />
          </svg>
          <span className="ml-[25px] size-[10px] rounded-full border-2 border-[#d98a25] flex items-center justify-center"><span className="size-[3px] bg-[#f0d9a8] rounded-full" /></span>
          <span className="ml-[6px] text-[9.5px] text-[#b5b9bf]">Hanr Ug</span>
          <span className="ml-[19px] text-[9.5px] text-[#b5b9bf]">Fam Sfileanding</span>
          <nav className="ml-auto mr-[8px] flex items-center text-[9px] text-[#c0c3c8]">
            <span className="w-[34px] h-[20px] bg-[#262a31] flex items-center justify-center">Viase</span>
            <span className="ml-[8px] size-[9px] bg-[#eeb33b] rounded-[1px]" />
            <span className="ml-[6px] w-[24px]">Scith</span>
            <span className="ml-[5px] w-[30px] h-[20px] bg-[#262a31] flex items-center justify-center">Ada</span>
            <span className="ml-[6px] w-[77px] h-[20px] bg-[#262a31] flex items-center justify-center gap-[8px]"><span>Boon</span><span>Phgnoe</span></span>
            <span className="ml-[7px] w-[59px] h-[20px] bg-[#262a31] flex items-center justify-center">Sea Can</span>
            <span className="ml-[7px] w-[59px] h-[20px] bg-[#262a31] flex items-center justify-center">Dim Houle</span>
          </nav>
        </header>
        <div className="flex-1 flex pl-[2px]">
          <Sidebar />
          <main className="ml-[5px] flex flex-col">
            <div className="flex gap-[5px] mt-[2px]">
              <MapPanel />
              <AnalyticsPanel />
            </div>
            <div className="flex items-center mt-[5px] h-[23px] pl-[2px] pr-[2px] w-[766px]">
              <div className="w-[82px] h-[23px] bg-[#2a2f36] flex items-center justify-around px-[6px] text-[#a9adb3]">
                <Minus size={9} /><LayoutGrid size={9} /><Users size={9} /><Settings size={9} />
              </div>
              <div className="ml-[30px] w-[24px] h-[23px] bg-[#2a2f36] flex items-center justify-center">
                <span className="size-[10px] rounded-[2px] bg-[#ee8d1c] flex items-center justify-center"><Check size={7} className="text-[#f7e3b8]" /></span>
              </div>
              <span className="ml-auto w-[97px] h-[22px] bg-[#2a2f36] text-[9px] text-[#b5b9bf] flex items-center justify-center">Adtensal Ganry</span>
              <span className="ml-[11px] w-[94px] h-[22px] bg-[#2a2f36] text-[9px] text-[#b5b9bf] flex items-center justify-center">Autlis Conteiay</span>
            </div>
            <div className="flex mt-[17px] pl-[2px] gap-[10px]">
              <Col1 />
              <Col2 />
              <div className="ml-[2px]"><Col3 /></div>
            </div>
            <div className="flex justify-end gap-[7px] mt-[9px] w-[766px]">
              <button className="w-[72px] h-[20px] rounded-[2px] bg-[#f5820f] text-[9px] font-bold text-[#fbe6cf]">Dozmet</button>
              <button className="w-[103px] h-[20px] rounded-[2px] bg-[#f5820f] text-[9px] font-bold text-[#fbe6cf]">Starr Conkitlod</button>
            </div>
          </main>
        </div>
      </div>
    </div>
  );
}
